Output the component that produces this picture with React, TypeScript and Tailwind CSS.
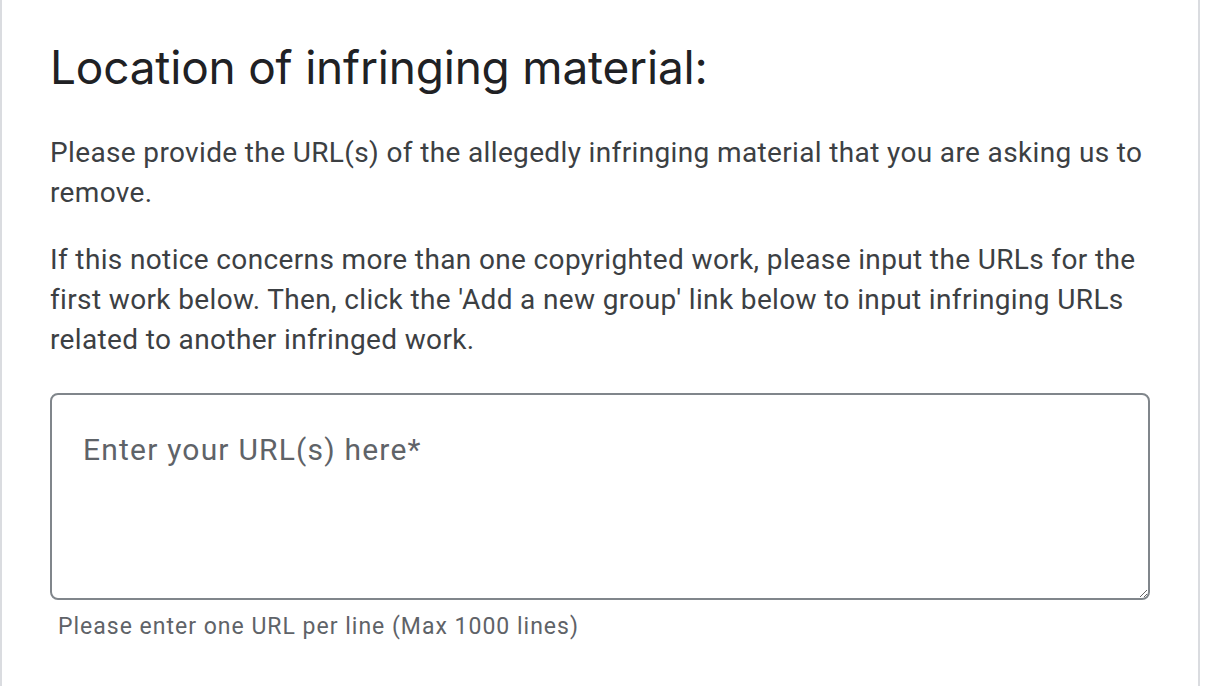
export default function App() {
  return (
    <div className="min-h-[686px] w-[1200px] border-x-2 border-[#dadce0] bg-white" style={{ fontFamily: "Roboto, Arial, sans-serif" }}>
      <div className="pl-[48px] pr-[48px] pt-[37px]">
        <h1 className="text-[46px] leading-[60px] font-normal tracking-[-0.2px] text-[#202124]" style={{ fontFamily: "Inter, 'Open Sans', sans-serif" }}>
          Location of infringing material:
        </h1>
        <p className="mt-[36px] text-[28px] leading-[40px] tracking-[0.36px] text-[#3c4043]">
          Please provide the URL(s) of the allegedly infringing material that you are asking us to remove.
        </p>
        <p className="mt-[27px] text-[28px] leading-[40px] tracking-[0.36px] text-[#3c4043]">
          If this notice concerns more than one copyrighted work, please input the URLs for the first work below. Then, click the 'Add a new group' link below to input infringing URLs related to another infringed work.
        </p>
        <textarea
          placeholder="Enter your URL(s) here*"
          className="mt-[33px] block h-[207px] w-[1100px] rounded-[8px] border-2 border-[#80868b] px-[31px] pt-[37px] text-[30px] leading-[36px] tracking-[1.2px] text-[#202124] outline-none placeholder:text-[#5f6368]"
        />
        <div className="mt-[12px] pl-[8px] text-[23px] leading-[30px] tracking-[1px] text-[#5f6368]">
          Please enter one URL per line (Max 1000 lines)
        </div>
      </div>
    </div>
  );
}
